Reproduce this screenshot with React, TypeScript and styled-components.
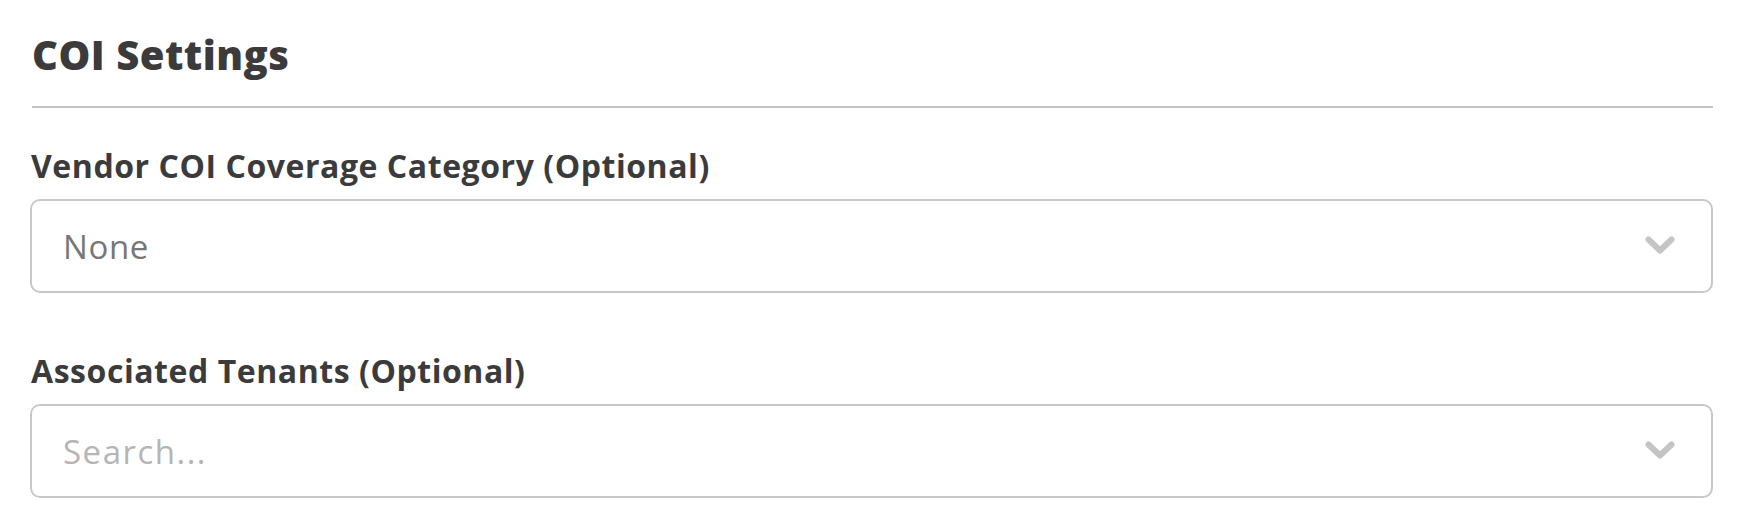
import styled, { createGlobalStyle } from 'styled-components';

const GlobalStyle = createGlobalStyle`
  body {
    margin: 0;
    background: #ffffff;
    font-family: "Open Sans", Lato, sans-serif;
    color: #3a3a3a;
  }
`;

const Page = styled.div`
  width: 1683px;
  padding: 31px 0 0 30px;
`;

const Title = styled.h2`
  margin: 0 0 0 2px;
  font-size: 40px;
  line-height: 48px;
  font-weight: 800;
  letter-spacing: 0.5px;
  color: #3b3b3b;
`;

const Divider = styled.hr`
  margin: 27px 0 0 2px;
  border: none;
  height: 2px;
  background: #c4c4c4;
`;

const Field = styled.div<{ $top: number }>`
  display: flex;
  flex-direction: column;
  gap: 13px;
  margin-top: ${({ $top }) => $top}px;
`;

const Label = styled.label`
  margin-left: 1px;
  font-size: 32px;
  line-height: 40px;
  font-weight: 700;
  letter-spacing: 0.55px;
  color: #3b3b3b;
`;

const SelectBox = styled.div`
  box-sizing: border-box;
  height: 94px;
  display: flex;
  align-items: center;
  justify-content: space-between;
  padding: 0 36px 0 31px;
  border: 2px solid #c8c8c8;
  border-radius: 10px;
  background: #fff;
`;

const Value = styled.span<{ $placeholder?: boolean }>`
  font-size: 33px;
  letter-spacing: ${({ $placeholder }) => ($placeholder ? '1.5px' : '0.6px')};
  color: ${({ $placeholder }) => ($placeholder ? '#b5b5b5' : '#777777')};
`;

function Chevron() {
  return (
    <svg width="30" height="20" viewBox="0 0 30 20" fill="none">
      <path
        d="M3.5 3.5 L15 14.5 L26.5 3.5"
        stroke="#c4c4c4"
        strokeWidth="6"
        strokeLinecap="round"
        strokeLinejoin="round"
      />
    </svg>
  );
}

export default function App() {
  return (
    <>
      <GlobalStyle />
      <Page>
        <Title>COI Settings</Title>
        <Divider />
        <Field $top={38}>
          <Label>Vendor COI Coverage Category (Optional)</Label>
          <SelectBox>
            <Value>None</Value>
            <Chevron />
          </SelectBox>
        </Field>
        <Field $top={58}>
          <Label>Associated Tenants (Optional)</Label>
          <SelectBox>
            <Value $placeholder>Search...</Value>
            <Chevron />
          </SelectBox>
        </Field>
      </Page>
    </>
  );
}
